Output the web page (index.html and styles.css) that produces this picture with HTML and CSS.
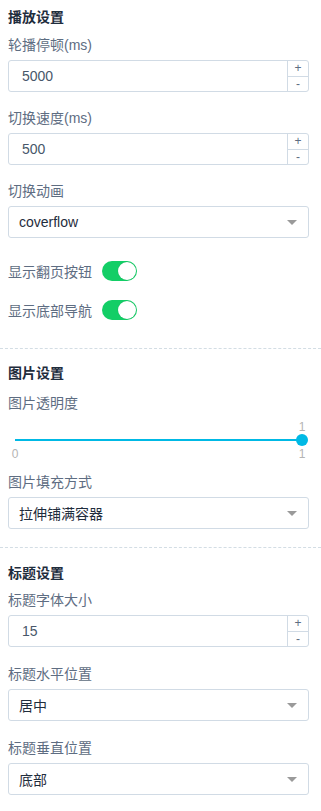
FILE: index.html
```html
<!DOCTYPE html>
<html>
<head>
<meta charset="utf-8">
<link rel="stylesheet" href="styles.css">
</head>
<body>
<div class="panel">
  <section class="sec sec1">
    <h3 class="heading">播放设置</h3>
    <div class="item">
      <div class="label">轮播停顿(ms)</div>
      <div class="num">
        <div class="num-val">5000</div>
        <div class="num-ctl"><span>+</span><span>-</span></div>
      </div>
    </div>
    <div class="item">
      <div class="label">切换速度(ms)</div>
      <div class="num">
        <div class="num-val">500</div>
        <div class="num-ctl"><span>+</span><span>-</span></div>
      </div>
    </div>
    <div class="item item-last">
      <div class="label">切换动画</div>
      <div class="select"><span>coverflow</span><i class="caret"></i></div>
    </div>
    <div class="toggle-row"><span class="tlabel">显示翻页按钮</span><span class="switch"><span class="knob"></span></span></div>
    <div class="toggle-row"><span class="tlabel">显示底部导航</span><span class="switch"><span class="knob"></span></span></div>
  </section>
  <section class="sec sec2">
    <h3 class="heading">图片设置</h3>
    <div class="label">图片透明度</div>
    <div class="slider">
      <div class="slider-val"><span>1</span></div>
      <div class="track"><span class="thumb"></span></div>
      <div class="ticks"><span class="t0">0</span><span class="t1">1</span></div>
    </div>
    <div class="item item-end">
      <div class="label">图片填充方式</div>
      <div class="select"><span>拉伸铺满容器</span><i class="caret"></i></div>
    </div>
  </section>
  <section class="sec sec3">
    <h3 class="heading">标题设置</h3>
    <div class="item">
      <div class="label">标题字体大小</div>
      <div class="num">
        <div class="num-val">15</div>
        <div class="num-ctl"><span>+</span><span>-</span></div>
      </div>
    </div>
    <div class="item">
      <div class="label">标题水平位置</div>
      <div class="select"><span>居中</span><i class="caret"></i></div>
    </div>
    <div class="item">
      <div class="label">标题垂直位置</div>
      <div class="select"><span>底部</span><i class="caret"></i></div>
    </div>
  </section>
</div>
</body>
</html>
```

FILE: styles.css
```css
* { box-sizing: border-box; }
body {
  margin: 0;
  background: #fff;
  font-family: "Liberation Sans", "Noto Sans CJK SC", sans-serif;
  font-size: 14px;
  color: #1f2d3d;
}
.sec {
  padding: 0 12px 0 8px;
  border-bottom: 1px dashed #d3dde4;
}
.sec3 { border-bottom: none; }
.sec1 { padding-top: 6px; padding-bottom: 26px; }
.sec2 { padding-top: 13px; padding-bottom: 18px; }
.sec3 { padding-top: 14px; }
.heading {
  margin: 0;
  font-size: 14px;
  font-weight: bold;
  line-height: 22px;
  color: #1f2d3d;
}
.sec1 .heading { margin-bottom: 6px; }
.sec2 .heading { margin-bottom: 8px; }
.sec3 .heading { margin-bottom: 5px; }
.label {
  line-height: 22px;
  color: #5e6d82;
  margin-bottom: 4px;
}
.item { margin-bottom: 15px; }
.sec3 .item { margin-bottom: 16px; }
.item-last { margin-bottom: 21px; }
.item-end { margin-bottom: 0; }
.num, .select {
  height: 32px;
  border: 1px solid #d1dbe5;
  border-radius: 3px;
  display: flex;
  align-items: center;
  background: #fff;
}
.num-val {
  flex: 1;
  padding-left: 13px;
  color: #48576a;
}
.num-ctl {
  width: 21px;
  height: 100%;
  border-left: 1px solid #d1dbe5;
  display: flex;
  flex-direction: column;
}
.num-ctl span {
  flex: 1;
  display: flex;
  align-items: center;
  justify-content: center;
  font-size: 12px;
  line-height: 1;
  color: #5e6d82;
}
.num-ctl span + span { border-top: 1px solid #d1dbe5; }
.select {
  padding: 0 11px 0 10px;
  justify-content: space-between;
  color: #1f2d3d;
}
.caret {
  width: 0;
  height: 0;
  border-left: 5px solid transparent;
  border-right: 5px solid transparent;
  border-top: 5px solid #9a9a9a;
}
.toggle-row {
  height: 24px;
  display: flex;
  align-items: center;
  margin-bottom: 15px;
}
.toggle-row:last-child { margin-bottom: 0; }
.tlabel { color: #5e6d82; width: 94px; }
.switch {
  width: 35px;
  height: 20px;
  border-radius: 10px;
  background: #13ce66;
  position: relative;
}
.knob {
  position: absolute;
  right: 1px;
  top: 1px;
  width: 18px;
  height: 18px;
  border-radius: 50%;
  background: #fff;
  box-shadow: 0 0 1px rgba(0,0,0,0.2);
}
.slider {
  padding: 2px 7px 0 7px;
  height: 53px;
  font-size: 12px;
  color: #b4b4b4;
}
.slider-val {
  display: flex;
  justify-content: flex-end;
  line-height: 14px;
  height: 14px;
}
.slider-val span { transform: translateX(50%); }
.track {
  position: relative;
  margin-top: 5px;
  height: 2px;
  background: #00b9e5;
}
.thumb {
  position: absolute;
  right: -6px;
  top: -5px;
  width: 12px;
  height: 12px;
  border-radius: 50%;
  background: #00b9e5;
}
.ticks {
  display: flex;
  justify-content: space-between;
  line-height: 14px;
  margin-top: 6px;
}
.t0 { transform: translateX(-50%); }
.t1 { transform: translateX(50%); }
```
